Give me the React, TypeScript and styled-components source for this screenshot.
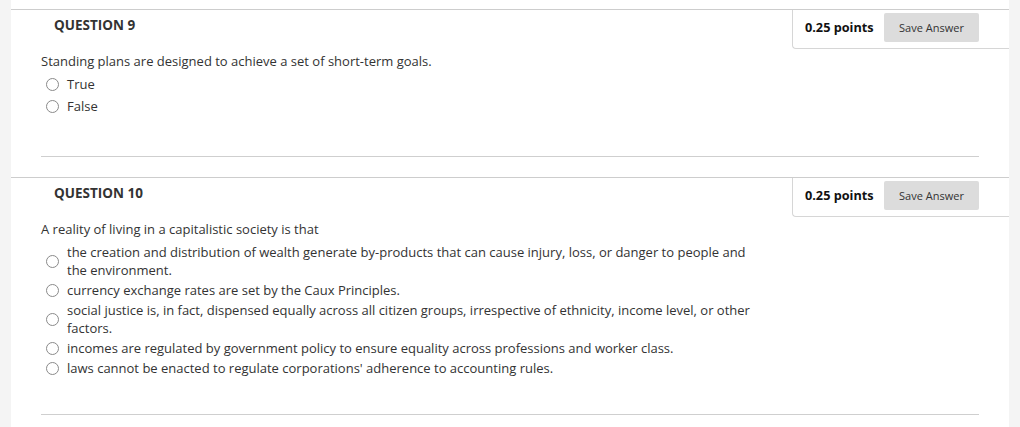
import styled, { createGlobalStyle } from 'styled-components'

const GlobalStyle = createGlobalStyle`
    html, body {
        margin: 0;
        padding: 0;
        background: #f4f4f4;
    }
    body {
        font-family: "Open Sans", "Liberation Sans", sans-serif;
        color: #333;
    }
`

const Page = styled.div`
    margin: 0 11px;
    background: #fff;
    height: 427px;
    padding-top: 9px;
    box-sizing: border-box;
    overflow: hidden;
`
const Question = styled.div`
    border-top: 1px solid #cdcdcd;
    margin-bottom: 20px;
`
const Header = styled.div`
    display: flex;
    justify-content: space-between;
    align-items: flex-start;
`
const Title = styled.h3`
    margin: 0;
    padding: 6px 0 0 43px;
    font-size: 13.5px;
    font-weight: 700;
    color: #333;
    line-height: 18px;
`
const PointsBox = styled.div`
    display: flex;
    align-items: center;
    height: 39px;
    padding: 3px 30px 7px 12px;
    border-left: 1px solid #d6d6d6;
    border-bottom: 1px solid #d6d6d6;
    border-bottom-left-radius: 4px;
    box-sizing: border-box;
    width: 217px;
    white-space: nowrap;
`
const Points = styled.span`
    font-size: 12.7px;
    font-weight: 700;
    color: #111;
`
const SaveButton = styled.button`
    flex: none;
    margin-left: auto;
    width: 95px;
    height: 29px;
    border: none;
    border-radius: 2px;
    background: #dcdcdc;
    font-family: "Open Sans", "Liberation Sans", sans-serif;
    font-size: 11px;
    color: #333;
    padding: 0;
`
const Body = styled.div`
    padding: 3px 30px 0 30px;
`
const Prompt = styled.div`
    font-size: 13px;
    line-height: 18px;
    margin-bottom: 4px;
`
const Options = styled.div<{ $gap: number }>`
    display: flex;
    flex-direction: column;
    gap: ${p => p.$gap}px;
    padding-left: 5px;
`
const Option = styled.label`
    display: flex;
    align-items: center;
    gap: 8px;
    padding: 1px 0;
    font-size: 13px;
    line-height: 18px;
`
const Radio = styled.span`
    flex: none;
    width: 11px;
    height: 11px;
    border: 1px solid #8a8a8a;
    border-radius: 50%;
    background: #fff;
`
const OptionText = styled.span`
    max-width: 690px;
`
const Divider = styled.div<{ $top: number }>`
    border-top: 1px solid #cfcfcf;
    margin-top: ${p => p.$top}px;
`

const questions = [
    {
        n: 9,
        prompt: 'Standing plans are designed to achieve a set of short-term goals.',
        options: ['True', 'False'],
        optionGap: 2,
        gap: 40,
    },
    {
        n: 10,
        prompt: 'A reality of living in a capitalistic society is that',
        options: [
            'the creation and distribution of wealth generate by-products that can cause injury, loss, or danger to people and the environment.',
            'currency exchange rates are set by the Caux Principles.',
            'social justice is, in fact, dispensed equally across all citizen groups, irrespective of ethnicity, income level, or other factors.',
            'incomes are regulated by government policy to ensure equality across professions and worker class.',
            'laws cannot be enacted to regulate corporations\' adherence to accounting rules.',
        ],
        optionGap: 0,
        gap: 36,
    },
]

const App = () => {
    return (
        <>
            <GlobalStyle />
            <Page>
                {questions.map(q => (
                    <Question key={q.n}>
                        <Header>
                            <Title>QUESTION {q.n}</Title>
                            <PointsBox>
                                <Points>0.25 points</Points>
                                <SaveButton>Save Answer</SaveButton>
                            </PointsBox>
                        </Header>
                        <Body>
                            <Prompt>{q.prompt}</Prompt>
                            <Options $gap={q.optionGap}>
                                {q.options.map(o => (
                                    <Option key={o}>
                                        <Radio />
                                        <OptionText>{o}</OptionText>
                                    </Option>
                                ))}
                            </Options>
                            <Divider $top={q.gap} />
                        </Body>
                    </Question>
                ))}
            </Page>
        </>
    )
}

export default App
